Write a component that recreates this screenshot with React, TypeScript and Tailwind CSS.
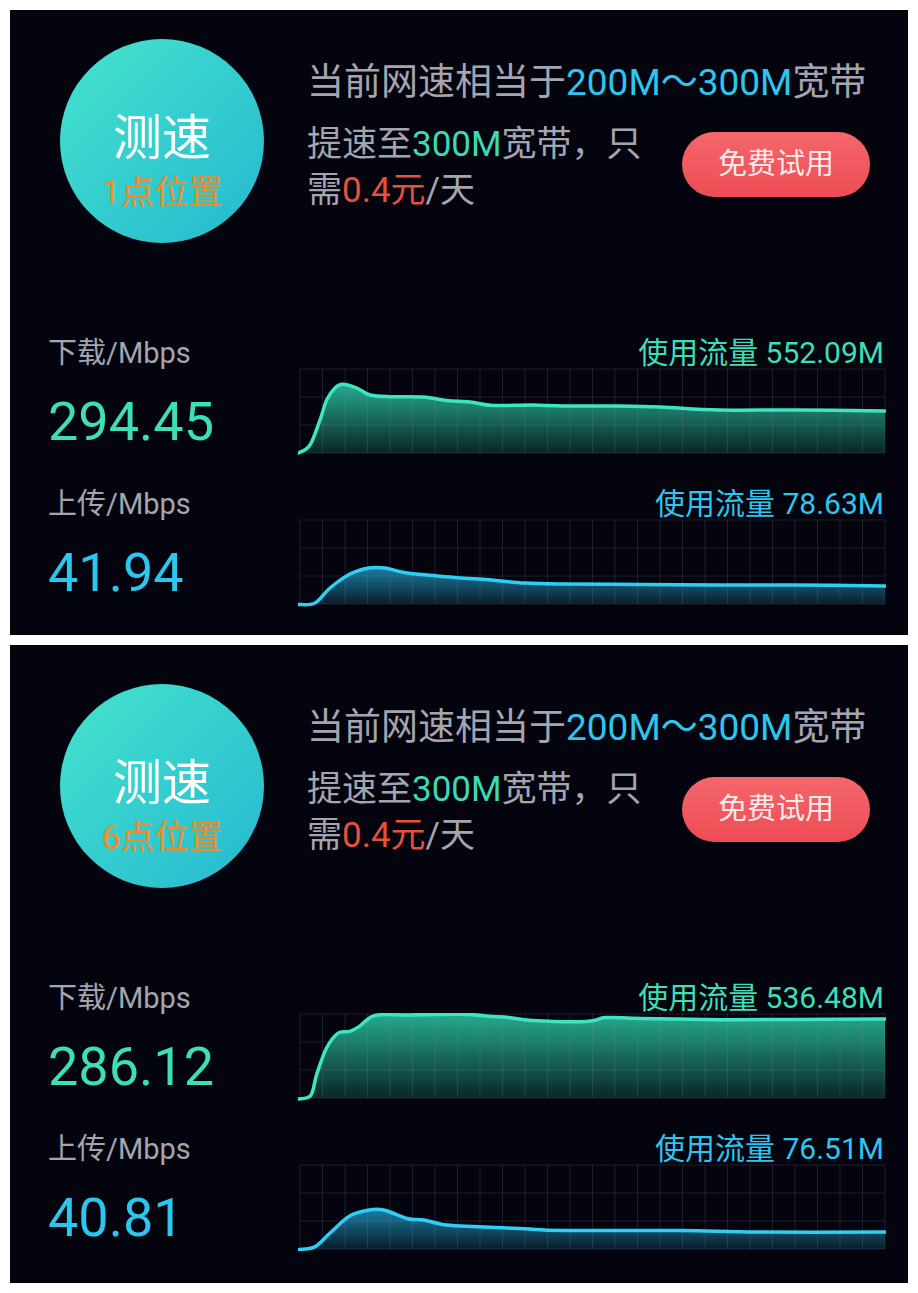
type Pt = [number, number];

const grayText = 'text-[#a5a5af]';

const dl1: Pt[] = [[0.5, 85], [12, 77], [22, 52], [28.7, 32], [37, 20], [45, 16.3], [58.7, 20], [72, 27], [92, 28.7], [125, 29], [148.7, 32.5], [172, 34], [195, 37.5], [234, 37], [265, 38], [316, 38], [362, 39], [420.6, 42], [498, 42], [587, 43]];
const ul1: Pt[] = [[0.5, 85.5], [17, 84], [32, 69], [52, 55], [71, 49], [87, 49], [106, 53.5], [129, 56], [156.5, 58.5], [187.6, 60.5], [226.5, 64], [265, 65], [343, 65.5], [420.6, 66], [498, 66], [587, 67]];
const dl2: Pt[] = [[0.5, 86], [12.9, 82.2], [18.7, 61.4], [28.4, 35.2], [40.1, 20.1], [51.7, 18.4], [61.4, 13.4], [77, 2.5], [110, 1.9], [164.3, 1.2], [191.5, 3.3], [210.9, 4.4], [234.2, 7.4], [288.6, 8.4], [308, 4.6], [343, 5.4], [420.6, 6.7], [498.3, 6.4], [587, 6]];
const ul2: Pt[] = [[0.5, 85.6], [16.8, 82.9], [32.3, 68.8], [51.7, 52], [71.1, 46], [86.7, 46.3], [110, 54.7], [125.5, 56], [148.8, 61.1], [179.9, 62.7], [226.5, 64.8], [265.3, 66.4], [381.8, 66.4], [459.5, 68.1], [587, 68.1]];

function smooth(pts: Pt[]) {
  let d = `M${pts[0][0]},${pts[0][1]}`;
  for (let i = 0; i < pts.length - 1; i++) {
    const p0 = pts[i - 1] || pts[i];
    const p1 = pts[i];
    const p2 = pts[i + 1];
    const p3 = pts[i + 2] || p2;
    const c1x = p1[0] + (p2[0] - p0[0]) / 6;
    const c1y = p1[1] + (p2[1] - p0[1]) / 6;
    const c2x = p2[0] - (p3[0] - p1[0]) / 6;
    const c2y = p2[1] - (p3[1] - p1[1]) / 6;
    d += ` C${c1x.toFixed(1)},${c1y.toFixed(1)} ${c2x.toFixed(1)},${c2y.toFixed(1)} ${p2[0]},${p2[1]}`;
  }
  return d;
}

const SpeedChart: React.FC<{ id: string; pts: Pt[]; kind: 'down' | 'up' }> = ({ id, pts, kind }) => {
  const line = smooth(pts);
  const last = pts[pts.length - 1];
  const area = `${line} L${last[0]},85 L${pts[0][0]},85 Z`;
  const stroke = kind === 'down' ? '#3de6c1' : '#2ecff5';
  const top = kind === 'down' ? '#27b396' : '#1c84aa';
  const bottom = kind === 'down' ? '#0a2726' : '#0a1c2a';
  return (
    <svg width="588" height="88" viewBox="0 0 588 88" className="block">
      <defs>
        <linearGradient id={id} x1="0" y1="0" x2="0" y2="1">
          <stop offset="0" stopColor={top} stopOpacity="0.95" />
          <stop offset="1" stopColor={bottom} stopOpacity="0.95" />
        </linearGradient>
      </defs>
      <path d={area} fill={`url(#${id})`} />
      {Array.from({ length: 27 }, (_, i) => (
        <line key={i} x1={2 + i * 22.5} y1="1" x2={2 + i * 22.5} y2="85" stroke="#8a8aa8" strokeOpacity="0.2" strokeWidth="1" />
      ))}
      {[1, 29, 57, 85].map(y => (
        <line key={y} x1="2" y1={y} x2="587" y2={y} stroke="#8a8aa8" strokeOpacity="0.2" strokeWidth="1" />
      ))}
      <path d={line} fill="none" stroke={stroke} strokeWidth="3.5" strokeLinecap="round" strokeLinejoin="round" />
    </svg>
  );
};

const Block: React.FC<{ label: string; value: string; used: string; color: string; chart: React.ReactNode }> = ({ label, value, used, color, chart }) => (
  <div className="flex h-[151px] pl-[38px]">
    <div className="w-[250px]">
      <div className={`text-[29px] leading-[36px] ${grayText}`}>{label}</div>
      <div className={`mt-[21px] text-[54px] leading-[60px] ${color}`}>{value}</div>
    </div>
    <div className="w-[588px]">
      <div className={`text-right pr-[2px] text-[30px] leading-[36px] ${color}`}>使用流量 {used}</div>
      <div className="-mt-[3px]">{chart}</div>
    </div>
  </div>
);

const Panel: React.FC<{ n: string; second?: boolean; down: string; up: string; downUsed: string; upUsed: string; dl: Pt[]; ul: Pt[] }> = ({ n, second, down, up, downUsed, upUsed, dl, ul }) => (
  <div className={`bg-[#04040f] ${second ? 'h-[638px] pt-[10px]' : 'h-[625px]'}`}>
    <div className="flex pl-[50px]">
      <div className="mt-[29px] w-[204px] h-[204px] shrink-0 rounded-full bg-linear-to-br from-[#45e4ce] to-[#25b8cf] flex flex-col items-center">
        <div className="mt-[74px] text-[49px] leading-[52px] text-white">测速</div>
        <div className="mt-[7px] text-[34px] leading-[40px] text-[#f18d28]">{n}点位置</div>
      </div>
      <div className="ml-[43px] mt-[51px]">
        <div className={`text-[37px] leading-[44px] whitespace-nowrap ${grayText}`}>
          当前网速相当于<span className="text-[#2cc6ef]">200M～300M</span>宽带
        </div>
        <div className="flex">
          <div className={`w-[375px] mt-[17px] text-[35px] leading-[46px] ${grayText}`}>
            <div>提速至<span className="text-[#3cd9b2]">300M</span>宽带，只</div>
            <div>需<span className="text-[#e5513c]">0.4元</span>/天</div>
          </div>
          <div className="mt-[27px] w-[188px] h-[65px] rounded-full bg-linear-to-b from-[#f3676a] to-[#ee4b55] flex items-center justify-center text-[29px] text-[#fdeaea]">
            免费试用
          </div>
        </div>
      </div>
    </div>
    <div className="mt-[92px]">
      <Block label="下载/Mbps" value={down} used={downUsed} color="text-[#3ddfb6]" chart={<SpeedChart id={`d${n}`} pts={dl} kind="down" />} />
      <Block label="上传/Mbps" value={up} used={upUsed} color="text-[#2cc6ef]" chart={<SpeedChart id={`u${n}`} pts={ul} kind="up" />} />
    </div>
  </div>
);

export default function App() {
  return (
    <div className="bg-white w-[918px] min-h-[1293px] p-[10px] flex flex-col gap-[10px] font-[Roboto,'Noto_Sans_CJK_SC',sans-serif]">
      <Panel n="1" down="294.45" up="41.94" downUsed="552.09M" upUsed="78.63M" dl={dl1} ul={ul1} />
      <Panel n="6" second down="286.12" up="40.81" downUsed="536.48M" upUsed="76.51M" dl={dl2} ul={ul2} />
    </div>
  );
}
